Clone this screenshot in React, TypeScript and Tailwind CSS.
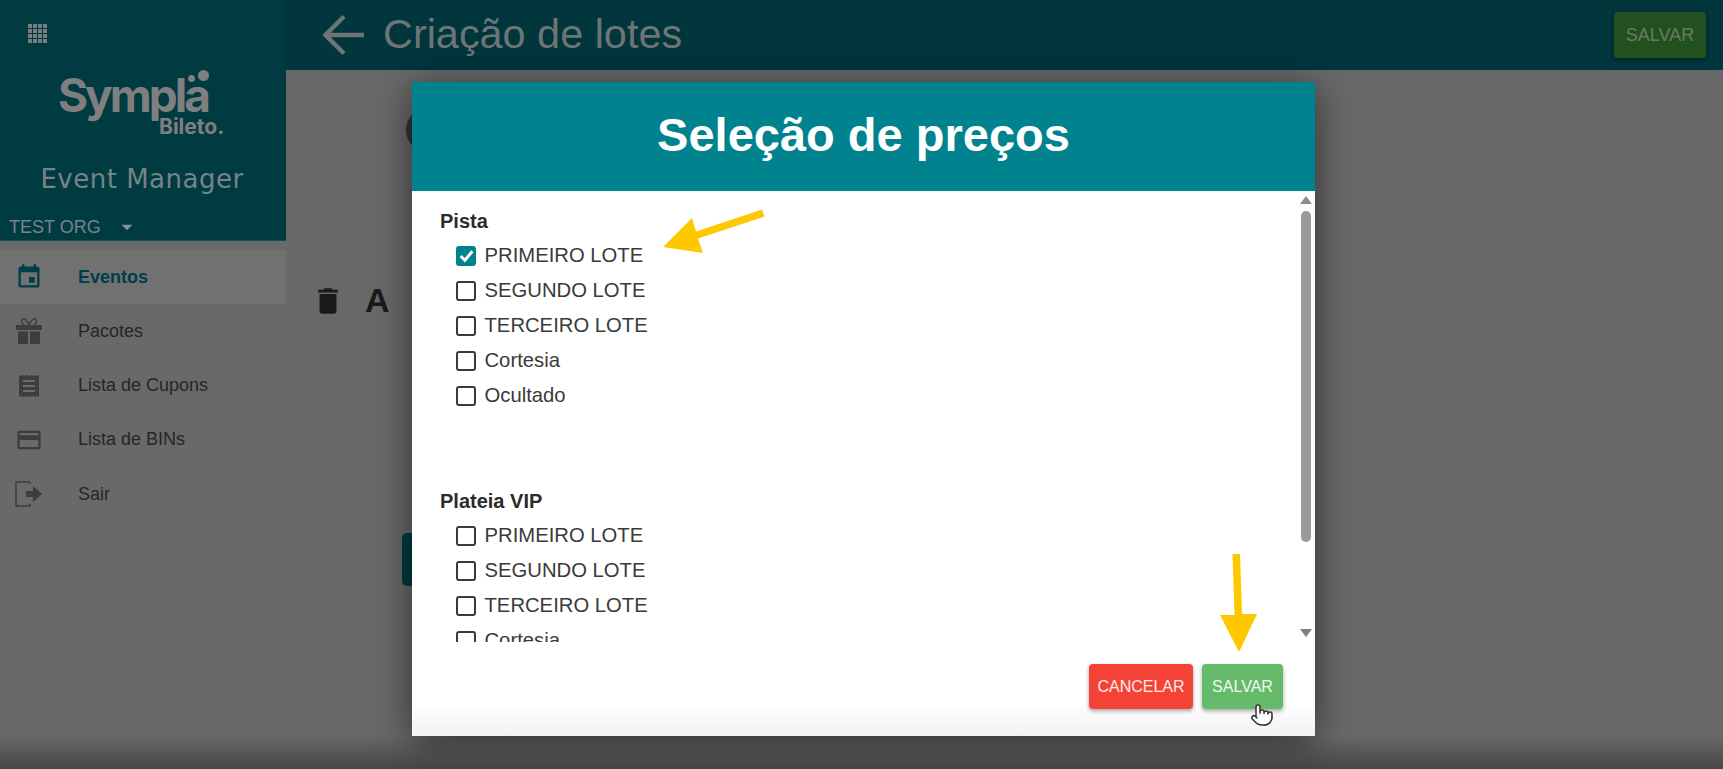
import { MdEvent, MdDelete, MdOutlineCreditCard, MdArrowDropDown } from "react-icons/md";
import { Pointer } from "lucide-react";
import type { ReactNode } from "react";

const lotes = ["PRIMEIRO LOTE", "SEGUNDO LOTE", "TERCEIRO LOTE", "Cortesia", "Ocultado"];

function AppsGrid() {
  const cells = [0, 1, 2, 3];
  return (
    <svg width="19" height="19" viewBox="0 0 19 19" fill="#767e80">
      {cells.map((r) => cells.map((c) => <rect key={`${r}-${c}`} x={c * 5} y={r * 5} width="4" height="4" />))}
    </svg>
  );
}

function GiftIcon() {
  return (
    <svg width="28" height="28" viewBox="0 0 28 28" fill="#3d3d3d">
      <path d="M1 8h26v5H1zM3 14.500h10V27H3zM15 14.500h10V27H15z" />
      <path d="M14 8C12 3 9 1 7.500 2S6 6.500 9 7.500M14 8c2-5 5-7 6.500-6S22 6.500 19 7.500" fill="none" stroke="#3d3d3d" strokeWidth="1.500" />
    </svg>
  );
}

function ReceiptIcon() {
  return (
    <svg width="22" height="22" viewBox="0 0 22 22">
      <path
        d="M1 0l2 1 2-1 2 1 2-1 2 1 2-1 2 1 2-1 2 1 2-1v22l-2-1-2 1-2-1-2 1-2-1-2 1-2-1-2 1-2-1-2 1z"
        fill="#3d3d3d"
      />
      <path d="M5 6h12M5 11h12M5 16h12" stroke="#6c6c6c" strokeWidth="1.800" />
    </svg>
  );
}

function ExitIcon() {
  return (
    <svg width="28" height="26" viewBox="0 0 28 26" fill="none">
      <path d="M15 1H1v24h14v-2" stroke="#3d3d3d" strokeWidth="1.500" />
      <path d="M15 1v2" stroke="#3d3d3d" strokeWidth="1.500" />
      <path d="M11 10h7V5l9 8-9 8v-5h-7z" fill="#3d3d3d" />
    </svg>
  );
}

function MenuItem({ icon, label, active }: { icon: ReactNode; label: string; active?: boolean }) {
  return (
    <div className={`flex h-[54.25px] items-center ${active ? "bg-[#717171]" : ""}`}>
      <div className="flex w-[78px] shrink-0 justify-center pr-[21px]">{icon}</div>
      <span className={active ? "text-[18px] font-bold text-[#003f48]" : "text-[18px] text-[#262626]"}>{label}</span>
    </div>
  );
}

function CheckRow({ label, checked }: { label: string; checked?: boolean }) {
  return (
    <div className="flex h-[35px] items-center pl-[16px]">
      {checked ? (
        <div className="flex h-[20px] w-[20px] items-center justify-center rounded-[3px] bg-[#00838f]">
          <svg width="17" height="17" viewBox="0 0 16 16" fill="none" stroke="#fff" strokeWidth="2.800">
            <path d="M2.500 8.500 6.500 12.500 13.500 4" />
          </svg>
        </div>
      ) : (
        <div className="h-[20px] w-[20px] rounded-[3px] border-2 border-[#3a3a3a]" />
      )}
      <span className="ml-[8.500px] text-[20.25px] text-[#3a3a3a]">{label}</span>
    </div>
  );
}

function Group({ title, first }: { title: string; first?: boolean }) {
  return (
    <div className={first ? "mb-[72px]" : ""}>
      <div className="h-[33px] text-[20px] leading-[33px] font-bold text-[#2b2b2b]">{title}</div>
      {lotes.map((l, i) => (
        <CheckRow key={l} label={l} checked={first && i === 0} />
      ))}
    </div>
  );
}

export default function App() {
  return (
    <div className="relative grid h-[769px] w-[1723px] grid-cols-[286px_1fr] overflow-hidden bg-[linear-gradient(180deg,#696969_0,#696969_735px,#474747_769px)] font-['Liberation_Sans',Arial,sans-serif]">
      <aside className="flex flex-col">
        <div className="flex h-[241px] flex-col border-b border-[#00565e] bg-[#003b42]">
          <div className="pt-[24px] pl-[28px]">
            <AppsGrid />
          </div>
          <div className="relative mt-[27px] ml-[58px] h-[70px] w-[170px] font-['Inter',sans-serif] font-bold text-[#7f7f7f]">
            <span className="absolute top-[5px] left-0 text-[46px] leading-[40px] tracking-[-3px]">Sympla</span>
            <span className="absolute top-[48px] left-[101px] text-[21px] leading-[18px]">Bileto.</span>
            <span className="absolute top-[5px] left-[130px] h-[7px] w-[7px] rounded-full bg-[#7f7f7f]" />
            <span className="absolute top-0 left-[140px] h-[11px] w-[11px] rounded-full bg-[#7f7f7f]" />
          </div>
          <div className="mt-[23px] pr-[2px] text-center font-['DejaVu_Sans',sans-serif] text-[26px] leading-[32px] tracking-[0.500px] text-[#778486]">
            Event Manager
          </div>
          <div className="mt-[19px] flex items-center pl-[9px] text-[18px] leading-[24px] text-[#778486]">
            TEST ORG
            <MdArrowDropDown size={26} className="ml-[13px] text-[#858f91]" />
          </div>
        </div>
        <nav className="pt-[9px]">
          <MenuItem active label="Eventos" icon={<MdEvent size={28} className="text-[#003f48]" />} />
          <MenuItem label="Pacotes" icon={<GiftIcon />} />
          <MenuItem label="Lista de Cupons" icon={<ReceiptIcon />} />
          <MenuItem label="Lista de BINs" icon={<MdOutlineCreditCard size={28} className="text-[#3d3d3d]" />} />
          <MenuItem label="Sair" icon={<ExitIcon />} />
        </nav>
      </aside>

      <div className="flex flex-col">
        <header className="flex h-[70px] items-center justify-between bg-[#00363c] pr-[17px] pl-[37px]">
          <div className="flex items-center">
            <svg width="42" height="42" viewBox="0 0 42 42" fill="none" stroke="#6e7577" strokeWidth="4.500">
              <path d="M41 21H3M21 2.500 2.500 21 21 39.500" />
            </svg>
            <h1 className="ml-[18px] text-[41.4px] leading-none font-normal text-[#6e7577]">Criação de lotes</h1>
          </div>
          <button className="h-[46px] w-[92px] rounded-[3px] bg-[#22501f] text-[18px] text-[#667c66] shadow-[0_2px_4px_rgba(0,0,0,0.4)]">SALVAR</button>
        </header>
        <main className="relative flex-1">
          {/* resto da tela, atras do modal */}
          <div className="absolute top-[37px] left-[120px] h-[46px] w-[46px] rounded-full bg-[#333333]" />
          <div className="absolute top-[205px] left-[25px] flex items-center gap-[20px]">
            <MdDelete size={34} className="text-[#1a1a1a]" />
            <span className="text-[34px] font-bold text-[#1a1a1a]">A</span>
          </div>
          <div className="absolute top-[463px] left-[116px] h-[53px] w-[40px] rounded-[5px] bg-[#003b42]" />
        </main>
      </div>

      <div className="absolute top-[82px] left-[412px] flex h-[654px] w-[903px] flex-col bg-[linear-gradient(180deg,#ffffff_0,#ffffff_620px,#f2f2f2_654px)] shadow-[0_6px_36px_rgba(0,0,0,0.55)]">
        <div className="flex h-[109px] shrink-0 items-center justify-center bg-[#00838f] pb-[2px] text-[47px] font-bold text-white">Seleção de preços</div>
        <div className="relative flex h-[451px] shrink-0">
          <div className="flex-1 overflow-hidden pt-[14px] pl-[28px]">
            <Group first title="Pista" />
            <Group title="Plateia VIP" />
          </div>
          <div className="flex w-[18px] shrink-0 flex-col items-center pt-[5px]">
            <div className="h-0 w-0 border-x-[6px] border-b-[8px] border-x-transparent border-b-[#8c8c8c]" />
            <div className="mt-[7px] h-[331px] w-[10px] rounded-[5px] bg-[#9a9a9a]" />
            <div className="mt-auto mb-[5px] h-0 w-0 border-x-[6px] border-t-[8px] border-x-transparent border-t-[#808080]" />
          </div>
        </div>
        <div className="flex flex-1 justify-end gap-[9px] pt-[22px] pr-[32px]">
          <button className="h-[45px] w-[104px] rounded-[4px] bg-[#f44336] text-[16px] text-white/90 shadow-[0_2px_4px_rgba(0,0,0,0.35)]">CANCELAR</button>
          <button className="h-[45px] w-[81px] rounded-[4px] bg-[#66bb6a] text-[16px] text-white/90 shadow-[0_2px_4px_rgba(0,0,0,0.35)]">SALVAR</button>
        </div>
      </div>

      {/* setas amarelas do tutorial */}
      <svg className="pointer-events-none absolute inset-0" width="1723" height="769" fill="#fdc800">
        <path d="M762 209.500 764.500 216.500 698 238.500 703 253 663 247 692 218 696 231.500z" />
        <path d="M1232.500 554H1240L1242 614H1257L1239 652 1220 615H1234.500z" />
      </svg>
      <Pointer className="pointer-events-none absolute top-[703px] left-[1250px]" size={24} fill="#fff" stroke="#333" strokeWidth={1.500} />
    </div>
  );
}
